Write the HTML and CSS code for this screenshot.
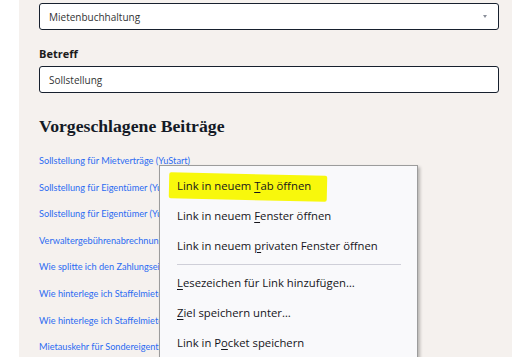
FILE: index.html
```html
<!DOCTYPE html>
<html lang="de">
<head>
  <meta charset="UTF-8" />
  <meta name="viewport" content="width=device-width, initial-scale=1.0"/>
  <title>Neue Anfrage</title>
  <link rel="stylesheet" href="styles.css">
</head>
<body>
  <div class="page">
    <div class="select">
      <span>Mietenbuchhaltung</span>
      <span class="arrow"></span>
    </div>

    <label class="label">Betreff</label>
    <div class="input">Sollstellung</div>

    <h2>Vorgeschlagene Beiträge</h2>
    <ul class="links">
      <li><a href="#">Sollstellung für Mietverträge (YuStart)</a></li>
      <li><a href="#">Sollstellung für Eigentümer (YuStart)</a></li>
      <li><a href="#">Sollstellung für Eigentümer (YuStart)</a></li>
      <li><a href="#">Verwaltergebührenabrechnung</a></li>
      <li><a href="#">Wie splitte ich den Zahlungseingang?</a></li>
      <li><a href="#">Wie hinterlege ich Staffelmieten?</a></li>
      <li><a href="#">Wie hinterlege ich Staffelmieten?</a></li>
      <li><a href="#">Mietauskehr für Sondereigentum</a></li>
    </ul>

    <!-- Kontextmenü -->
    <div class="menu">
      <div class="item marked"><span class="marker"></span><span class="txt">Link in neuem <u>T</u>ab öffnen</span></div>
      <div class="item">Link in neuem <u>F</u>enster öffnen</div>
      <div class="item">Link in neuem <u>p</u>rivaten Fenster öffnen</div>
      <div class="sep"></div>
      <div class="item"><u>L</u>esezeichen für Link hinzufügen…</div>
      <div class="item"><u>Z</u>iel speichern unter…</div>
      <div class="item">Link in P<u>o</u>cket speichern</div>
    </div>
  </div>
</body>
</html>
```

FILE: styles.css
```css
body {
  margin: 0;
  background-color: #ffffff;
  font-family: "Open Sans", Arial, sans-serif;
  overflow: hidden;
}

.page {
  position: relative;
  margin-left: 19px;
  height: 357px;
  padding: 3px 13px 0 20px;
  background-color: #f5f1ee;
  color: #1b1b1b;
}

.select,
.input {
  box-sizing: border-box;
  height: 27px;
  border: 1px solid #17202e;
  border-radius: 3px;
  background-color: #ffffff;
  display: flex;
  align-items: center;
  padding: 0 9px;
  font-size: 10px;
  color: #333;
}

.select {
  justify-content: space-between;
}

.arrow {
  width: 0;
  height: 0;
  border-left: 2.5px solid transparent;
  border-right: 2.5px solid transparent;
  border-top: 3px solid #8a8f99;
  margin-right: 2px;
}

.label {
  display: block;
  margin: 17px 0 5px;
  font-size: 11px;
  line-height: 14px;
  font-weight: bold;
  color: #1b1b1b;
}

h2 {
  margin: 23px 0 0;
  font-family: "Liberation Serif", "DejaVu Serif", serif;
  font-size: 17.7px;
  line-height: 20px;
  font-weight: bold;
  color: #141a26;
}

.links {
  list-style: none;
  margin: 12px 0 0;
  padding: 0;
}

.links li {
  font-family: Lato, "Open Sans", sans-serif;
  font-size: 9.2px;
  line-height: 26.6px;
}

.links a {
  color: #2c6cf2;
  text-decoration: none;
}

.menu {
  position: absolute;
  left: 140px;
  top: 165px;
  width: 257px;
  height: 200px;
  padding-top: 5px;
  background-color: #f9f9fb;
  border: 1px solid #9c9c9c;
  box-shadow: 2px 2px 3px rgba(0, 0, 0, 0.25);
  font-family: "Open Sans", "Noto Sans", sans-serif;
  font-size: 11.3px;
  color: #15141a;
}

.item {
  position: relative;
  height: 30px;
  line-height: 30px;
  padding-left: 17px;
}

.item u {
  text-decoration-thickness: 1px;
  text-underline-offset: 2px;
}

.marker {
  position: absolute;
  left: 9px;
  top: 3px;
  width: 158px;
  height: 26px;
  background-color: #f8f80c;
  transform: rotate(1.3deg);
  border-radius: 2px;
}

.txt {
  position: relative;
}

.sep {
  height: 1px;
  margin: 3px 16px 3px 17px;
  background-color: #cfcfd8;
}
```
